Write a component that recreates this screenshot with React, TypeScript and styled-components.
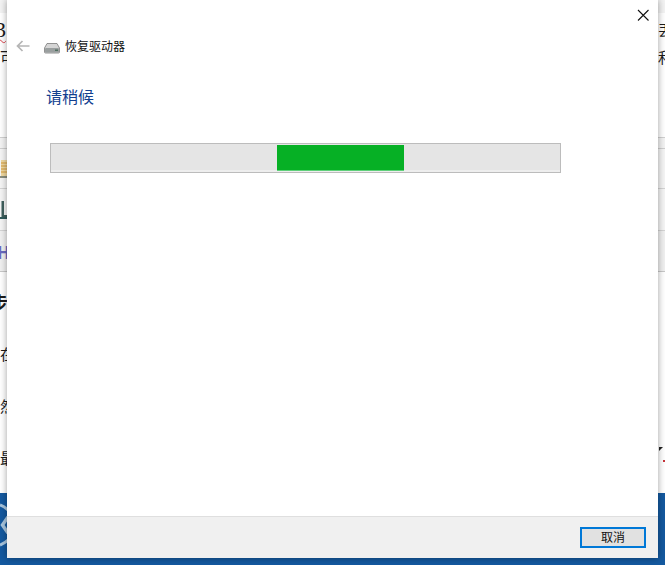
import styled, { createGlobalStyle } from "styled-components";

const GlobalStyle = createGlobalStyle`
  html, body {
    margin: 0;
    padding: 0;
    background: #fff;
  }
  #root {
    width: 665px;
    height: 565px;
    overflow: hidden;
  }
`;

const Screen = styled.div`
  position: relative;
  width: 665px;
  height: 565px;
  overflow: hidden;
  background: #fff;
  font-family: "Noto Sans CJK SC", "Liberation Sans", sans-serif;
`;

/* the document window behind the dialog */
const Backdrop = styled.div`
  height: 565px;
  display: flex;
  flex-direction: column;
`;

const Ruler = styled.div<{ $h: number; $bg?: string; $line?: string }>`
  height: ${(p) => p.$h}px;
  box-sizing: border-box;
  flex-shrink: 0;
  display: flex;
  align-items: center;
  justify-content: space-between;
  overflow: hidden;
  background: ${(p) => p.$bg ?? "#fff"};
  border-bottom: 1px solid ${(p) => p.$line ?? "transparent"};
`;

const Frag = styled.span<{ $size?: number; $color?: string; $bold?: boolean; $ml?: number; $mr?: number; $serif?: boolean; $wavy?: boolean }>`
  font-size: ${(p) => p.$size ?? 17}px;
  line-height: 1;
  color: ${(p) => p.$color ?? "#1b1b1b"};
  font-weight: ${(p) => (p.$bold ? 700 : 400)};
  margin-left: ${(p) => p.$ml ?? 0}px;
  margin-right: ${(p) => p.$mr ?? 0}px;
  font-family: ${(p) => (p.$serif ? '"Liberation Serif", serif' : "inherit")};
  text-decoration: ${(p) => (p.$wavy ? "underline wavy #d9404a 1px" : "none")};
  text-underline-offset: 2px;
  white-space: nowrap;
`;

const RightEdge = styled.div`
  display: flex;
  align-items: flex-start;
  height: 24px;
  width: 6px;
  position: relative;
`;

const SmallMark = styled.span`
  width: 0;
  height: 0;
  border-top: 4px solid #222;
  border-right: 4px solid transparent;
  margin-top: 1px;
`;

const RedDot = styled.span`
  position: absolute;
  right: 0;
  top: 14px;
  width: 2px;
  height: 2px;
  background: #c8343a;
`;

const StripIcon = styled.svg`
  width: 7px;
  height: 20px;
  flex-shrink: 0;
`;

const Desktop = styled.div`
  flex: 1;
  background: #14599f;
  position: relative;
  overflow: hidden;
`;

const Emblem = styled.svg`
  position: absolute;
  left: 0;
  top: 10px;
  width: 8px;
  height: 44px;
`;

const Dialog = styled.div`
  position: absolute;
  left: 7px;
  top: 0;
  width: 651px;
  height: 558px;
  display: flex;
  flex-direction: column;
  background: #fff;
  box-shadow: 0 0 7px rgba(0, 0, 0, 0.38);
`;

const Body = styled.div`
  flex: 1;
  position: relative;
  display: flex;
  flex-direction: column;
`;

const CloseButton = styled.button`
  position: absolute;
  top: 8px;
  right: 8px;
  width: 14px;
  height: 14px;
  padding: 0;
  border: 0;
  background: none;
  display: flex;
`;

const Nav = styled.div`
  height: 28px;
  margin-top: 32px;
  display: flex;
  align-items: center;
  padding-left: 9px;
`;

const BackButton = styled.span`
  width: 14px;
  height: 12px;
  display: flex;
  margin-right: 14px;
`;

const DriveIcon = styled.svg`
  width: 16px;
  height: 12px;
  margin-right: 5px;
  margin-top: 4px;
`;

const NavTitle = styled.span`
  font-size: 12px;
  line-height: 1;
  color: #111;
`;

const Heading = styled.h1`
  margin: 25px 0 0 39px;
  font-size: 16px;
  line-height: 22px;
  font-weight: 400;
  color: #12408f;
`;

const Track = styled.div`
  margin: 36px 0 0 43px;
  width: 511px;
  height: 30px;
  box-sizing: border-box;
  border: 1px solid #bcbcbc;
  background: #e5e5e5;
  box-shadow: inset 0 -2px 0 #eeeeee;
  display: flex;
`;

const Bar = styled.div`
  margin: 1px 0 0 226px;
  width: 127px;
  height: 26px;
  box-sizing: border-box;
  background: #06b025;
  border-bottom: 1px solid #5fd07a;
`;

const Footer = styled.div`
  height: 42px;
  box-sizing: border-box;
  background: #f0f0f0;
  border-top: 1px solid #dfdfdf;
  display: flex;
  justify-content: flex-end;
  align-items: center;
  padding: 0 12px 0 0;
`;

const CancelButton = styled.button`
  width: 66px;
  height: 21px;
  box-sizing: border-box;
  border: 2px solid #0078d7;
  background: #e1e1e1;
  padding: 0 0 2px;
  font-family: inherit;
  font-size: 12px;
  line-height: 1;
  color: #111;
`;

export default function App() {
  return (
    <>
      <GlobalStyle />
      <Screen>
        <Backdrop>
          <Ruler $h={13} $bg="#f3f3f3" />
          <Ruler $h={34}>
            <Frag $serif $size={22} $ml={-5} $wavy>3</Frag>
            <Frag $size={15} $mr={-8}>丟</Frag>
          </Ruler>
          <Ruler $h={20}>
            <Frag $size={15}>可</Frag>
            <Frag $size={15} $mr={-8}>和</Frag>
          </Ruler>
          <Ruler $h={71} $line="#d0d0d0" />
          <Ruler $h={11} $bg="#f3f3f3" $line="#cfcfcf" />
          <Ruler $h={40} $bg="#f5f5f5" $line="#d4d4d4">
            <StripIcon viewBox="0 0 7 20">
              <rect x="1" y="1" width="6" height="16" fill="#f0d9a0" />
              <path d="M1 4 H7 M1 7 H7 M1 10 H7 M1 13 H7" stroke="#d49a3c" strokeWidth="1" />
              <rect x="0" y="17" width="7" height="2" fill="#8a8f80" />
            </StripIcon>
          </Ruler>
          <Ruler $h={42} $bg="#f5f5f5" $line="#d4d4d4">
            <StripIcon viewBox="0 0 7 20">
              <path d="M1.5 1 H4 V15 H7 V17 H1.5 Z" fill="#3f5f5c" />
              <rect x="0" y="17" width="7" height="2" fill="#2f5a5a" />
            </StripIcon>
          </Ruler>
          <Ruler $h={41} $bg="#f0f0f0" $line="#c8c8c8">
            <Frag $size={17} $color="#6a6ac0" $bold $ml={-3}>H</Frag>
          </Ruler>
          <Ruler $h={4} />
          <Ruler $h={52}>
            <Frag $size={18} $bold $ml={-10}>步</Frag>
          </Ruler>
          <Ruler $h={52}>
            <Frag $size={15}>在</Frag>
          </Ruler>
          <Ruler $h={52}>
            <Frag $size={15}>然</Frag>
          </Ruler>
          <Ruler $h={52}>
            <Frag $size={15}>最</Frag>
            <RightEdge>
              <SmallMark />
              <RedDot />
            </RightEdge>
          </Ruler>
          <Ruler $h={9} />
          <Desktop>
            <Emblem viewBox="0 0 8 44">
              <path d="M0 2 Q5 4 8 7 M0 42 Q5 40 8 37" stroke="#a9c6de" strokeWidth="3" fill="none" />
              <path d="M8 14 L2.5 22 L8 30" stroke="#a9c6de" strokeWidth="3.5" fill="none" />
            </Emblem>
          </Desktop>
        </Backdrop>

        <Dialog>
          <Body>
            <CloseButton aria-label="关闭">
              <svg width="14" height="14" viewBox="0 0 14 14">
                <path d="M2 2 L12.5 12.5 M12.5 2 L2 12.5" stroke="#111" strokeWidth="1.1" fill="none" />
              </svg>
            </CloseButton>
            <Nav>
              <BackButton>
                <svg width="14" height="12" viewBox="0 0 14 12">
                  <path d="M6.5 1 L1.5 6 L6.5 11 M1.5 6 H13.5" stroke="#b5b5b5" strokeWidth="1.7" fill="none" />
                </svg>
              </BackButton>
              <DriveIcon viewBox="0 0 16 12">
                <path d="M3 1.5 H13 L15.5 6 V10 Q15.5 11 14.5 11 H1.5 Q0.5 11 0.5 10 V6 Z" fill="#d5d5d5" stroke="#7b7b7b" strokeWidth="0.8" />
                <rect x="1" y="6" width="14" height="4.5" rx="1" fill="#9a9f9f" />
                <rect x="11" y="7.5" width="3" height="1.5" fill="#4f6f5f" />
              </DriveIcon>
              <NavTitle>恢复驱动器</NavTitle>
            </Nav>
            <Heading>请稍候</Heading>
            <Track>
              <Bar />
            </Track>
          </Body>
          <Footer>
            <CancelButton>取消</CancelButton>
          </Footer>
        </Dialog>
      </Screen>
    </>
  );
}
